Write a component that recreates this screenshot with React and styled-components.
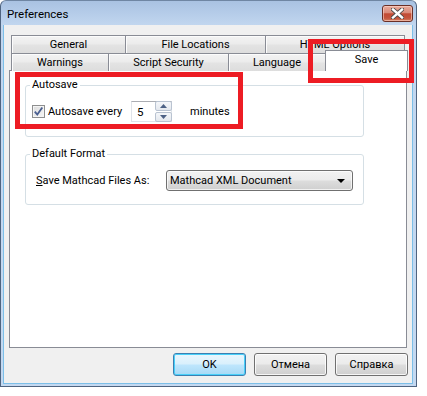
import React from 'react';
import styled, { createGlobalStyle } from 'styled-components';

const Global = createGlobalStyle`
  html, body { margin: 0; padding: 0; background: #ffffff; }
  body { font-family: Roboto, "Liberation Sans", sans-serif; font-size: 11px; color: #000; }
  * { box-sizing: border-box; }
`;

const Stage = styled.div`
  position: relative;
  width: 427px;
  height: 396px;
  overflow: hidden;
`;

const Window = styled.div`
  width: 417px;
  height: 387px;
  display: flex;
  flex-direction: column;
  border: 1px solid #4f6480;
  border-top-color: #6f86a3;
  border-radius: 6px 6px 0 0;
  background: linear-gradient(#a9c2e2, #c1d6ef 24px, #c4d9f1);
  padding: 0 3px 2px 2px;
`;

const TitleBar = styled.div`
  height: 24px;
  display: flex;
  align-items: flex-start;
  justify-content: space-between;
  padding: 4px 0 0 4px;
`;

const Title = styled.div`
  font-size: 11.5px;
  line-height: 18px;
  color: #000;
`;

const CloseBtn = styled.div`
  width: 31px;
  height: 17px;
  display: flex;
  align-items: center;
  justify-content: center;
  border: 1px solid #6a2f27;
  border-radius: 3px;
  background: linear-gradient(#e9ab9d, #d98a79 45%, #c24a33 52%, #c4533c 80%, #d4805f);
  box-shadow: inset 0 0 0 1px rgba(255, 220, 210, 0.55);
`;

const Client = styled.div`
  flex: 1;
  display: flex;
  flex-direction: column;
  background: #f0f0f0;
  border: 1px solid #7cbfe8;
  border-top: none;
  padding: 10px 5px 7px 5px;
`;

const TabControl = styled.div`
  flex: 1;
  display: flex;
  flex-direction: column;
`;

const TabRow = styled.div`
  display: flex;
  align-items: flex-start;
  height: ${(p) => p.h}px;
  padding-left: 2px;
`;

const Tab = styled.div`
  position: relative;
  flex: none;
  width: ${(p) => p.w}px;
  height: ${(p) => (p.selected ? 21 : 18)}px;
  margin-top: ${(p) => (p.selected ? -3 : 0)}px;
  margin-right: -1px;
  z-index: ${(p) => (p.selected ? 2 : 1)};
  display: flex;
  align-items: center;
  justify-content: center;
  border: 1px solid #898c95;
  border-bottom: none;
  background: ${(p) =>
    p.selected
      ? '#ffffff'
      : 'linear-gradient(#f3f3f3, #ececec 45%, #e3e3e3 55%, #dddddd)'};
  box-shadow: ${(p) => (p.selected ? 'none' : 'inset 1px 1px 0 #fcfcfc')};
  line-height: 14px;
  padding-bottom: ${(p) => (p.selected ? 3 : 0)}px;
`;

const Panel = styled.div`
  flex: 1;
  border: 1px solid #898c95;
  background: #ffffff;
  padding: 7px 42px 0 15px;
  display: flex;
  flex-direction: column;
`;

const Group = styled.fieldset`
  margin: ${(p) => p.mt || 0}px 0 0 0;
  border: 1px solid #d5dfe5;
  border-radius: 3px;
  padding: 9px 0 ${(p) => p.pb}px 6px;
  min-width: 0;
`;

const Legend = styled.legend`
  padding: 0 2px;
  margin-left: -2px;
  line-height: 14px;
`;

const Row = styled.div`
  display: flex;
  align-items: center;
  height: 21px;
  padding-left: ${(p) => p.pl || 0}px;
`;

const CheckBox = styled.span`
  width: 13px;
  height: 13px;
  flex: none;
  border: 1px solid #8e8f8f;
  background: linear-gradient(135deg, #dcdcdc, #f6f6f6);
  box-shadow: inset 0 0 0 1px #f4f4f4;
  display: flex;
  align-items: center;
  justify-content: center;
  margin-right: 3px;
`;

const Label = styled.span`
  white-space: nowrap;
  width: ${(p) => (p.w ? `${p.w}px` : 'auto')};
  margin-right: ${(p) => p.mr || 0}px;
`;

const Spin = styled.div`
  position: relative;
  width: 41px;
  height: 21px;
  border: 1px solid #dfe3e9;
  border-top-color: #abadb3;
  background: #fff;
  display: flex;
  align-items: center;
  padding-left: 5px;
  margin-right: 18px;
  font-size: 11.5px;
`;

const SpinButtons = styled.div`
  position: absolute;
  right: -1px;
  top: -1px;
  width: 17px;
  height: 21px;
  display: flex;
  flex-direction: column;
  gap: 1px;
`;

const SpinBtn = styled.div`
  flex: 1;
  border: 1px solid #b9c3d1;
  border-radius: 2px;
  background: linear-gradient(#f5f7fa, #e4e8ee);
  display: flex;
  align-items: center;
  justify-content: center;
`;

const Underline = styled.span`
  text-decoration: underline;
`;

const Select = styled.div`
  width: 187px;
  height: 21px;
  border: 1px solid #707070;
  border-radius: 3px;
  background: linear-gradient(#f2f2f2, #ebebeb 48%, #dddddd 52%, #cfcfcf);
  box-shadow: inset 0 0 0 1px rgba(255, 255, 255, 0.7);
  display: flex;
  align-items: center;
  justify-content: space-between;
  padding: 0 7px 0 3px;
`;

const Arrow = styled.span`
  width: 0;
  height: 0;
  border-left: 4px solid transparent;
  border-right: 4px solid transparent;
  border-top: 4px solid #000;
`;

const ButtonRow = styled.div`
  display: flex;
  justify-content: flex-end;
  gap: 8px;
  margin-top: 5px;
  margin-right: -1px;
`;

const Button = styled.div`
  width: 73px;
  height: 23px;
  display: flex;
  align-items: center;
  justify-content: center;
  border: 1px solid ${(p) => (p.primary ? '#3c7fb1' : '#707070')};
  border-radius: 3px;
  background: ${(p) =>
    p.primary
      ? 'linear-gradient(#eaf6fd, #d9f0fc 48%, #bee6fd 52%, #a7d9f5)'
      : 'linear-gradient(#f2f2f2, #ebebeb 48%, #dddddd 52%, #cfcfcf)'};
  box-shadow: inset 0 0 0 1px ${(p) => (p.primary ? '#48d0f9' : 'rgba(255,255,255,0.8)')};
`;

const Mark = styled.div`
  position: absolute;
  left: ${(p) => p.x}px;
  top: ${(p) => p.y}px;
  width: ${(p) => p.w}px;
  height: ${(p) => p.h}px;
  border: 5px solid #ed1c24;
  pointer-events: none;
  z-index: 5;
`;

export default function App() {
  return (
    <Stage>
      <Global />
      <Window>
        <TitleBar>
          <Title>Preferences</Title>
          <CloseBtn>
            <svg width="13" height="11" viewBox="0 0 13 11">
              <path d="M2 1.5 L11 9.5 M11 1.5 L2 9.5" stroke="#4a4a4a" strokeWidth="4.2" strokeLinecap="square" />
              <path d="M2 1.5 L11 9.5 M11 1.5 L2 9.5" stroke="#ffffff" strokeWidth="2.4" strokeLinecap="square" />
            </svg>
          </CloseBtn>
        </TitleBar>
        <Client>
          <TabControl>
            <TabRow h={18}>
              <Tab w={115}>General</Tab>
              <Tab w={141}>File Locations</Tab>
              <Tab w={140}>HTML Options</Tab>
            </TabRow>
            <TabRow h={17}>
              <Tab w={98}>Warnings</Tab>
              <Tab w={121}>Script Security</Tab>
              <Tab w={98}>Language</Tab>
              <Tab w={83} selected>Save</Tab>
            </TabRow>
            <Panel>
              <Group pb={14}>
                <Legend>Autosave</Legend>
                <Row>
                  <CheckBox>
                    <svg width="11" height="11" viewBox="0 0 11 11">
                      <path d="M1.8 5.6 L4.3 8.6 L9.3 1.6" fill="none" stroke="#4a5f90" strokeWidth="1.8" />
                    </svg>
                  </CheckBox>
                  <Label w={83}>Autosave every</Label>
                  <Spin>
                    5
                    <SpinButtons>
                      <SpinBtn>
                        <svg width="7" height="4" viewBox="0 0 7 4"><path d="M0 4 L3.5 0 L7 4 Z" fill="#4d6185" /></svg>
                      </SpinBtn>
                      <SpinBtn>
                        <svg width="7" height="4" viewBox="0 0 7 4"><path d="M0 0 L3.5 4 L7 0 Z" fill="#4d6185" /></svg>
                      </SpinBtn>
                    </SpinButtons>
                  </Spin>
                  <Label>minutes</Label>
                </Row>
              </Group>
              <Group mt={10} pb={13}>
                <Legend>Default Format</Legend>
                <Row pl={4}>
                  <Label w={130}>
                    <Underline>S</Underline>ave Mathcad Files As:
                  </Label>
                  <Select>
                    <span>Mathcad XML Document</span>
                    <Arrow />
                  </Select>
                </Row>
              </Group>
            </Panel>
          </TabControl>
          <ButtonRow>
            <Button primary>OK</Button>
            <Button>Отмена</Button>
            <Button>Справка</Button>
          </ButtonRow>
        </Client>
      </Window>
      <Mark x={308} y={39} w={106} h={44} />
      <Mark x={15} y={72} w={228} h={57} />
    </Stage>
  );
}
